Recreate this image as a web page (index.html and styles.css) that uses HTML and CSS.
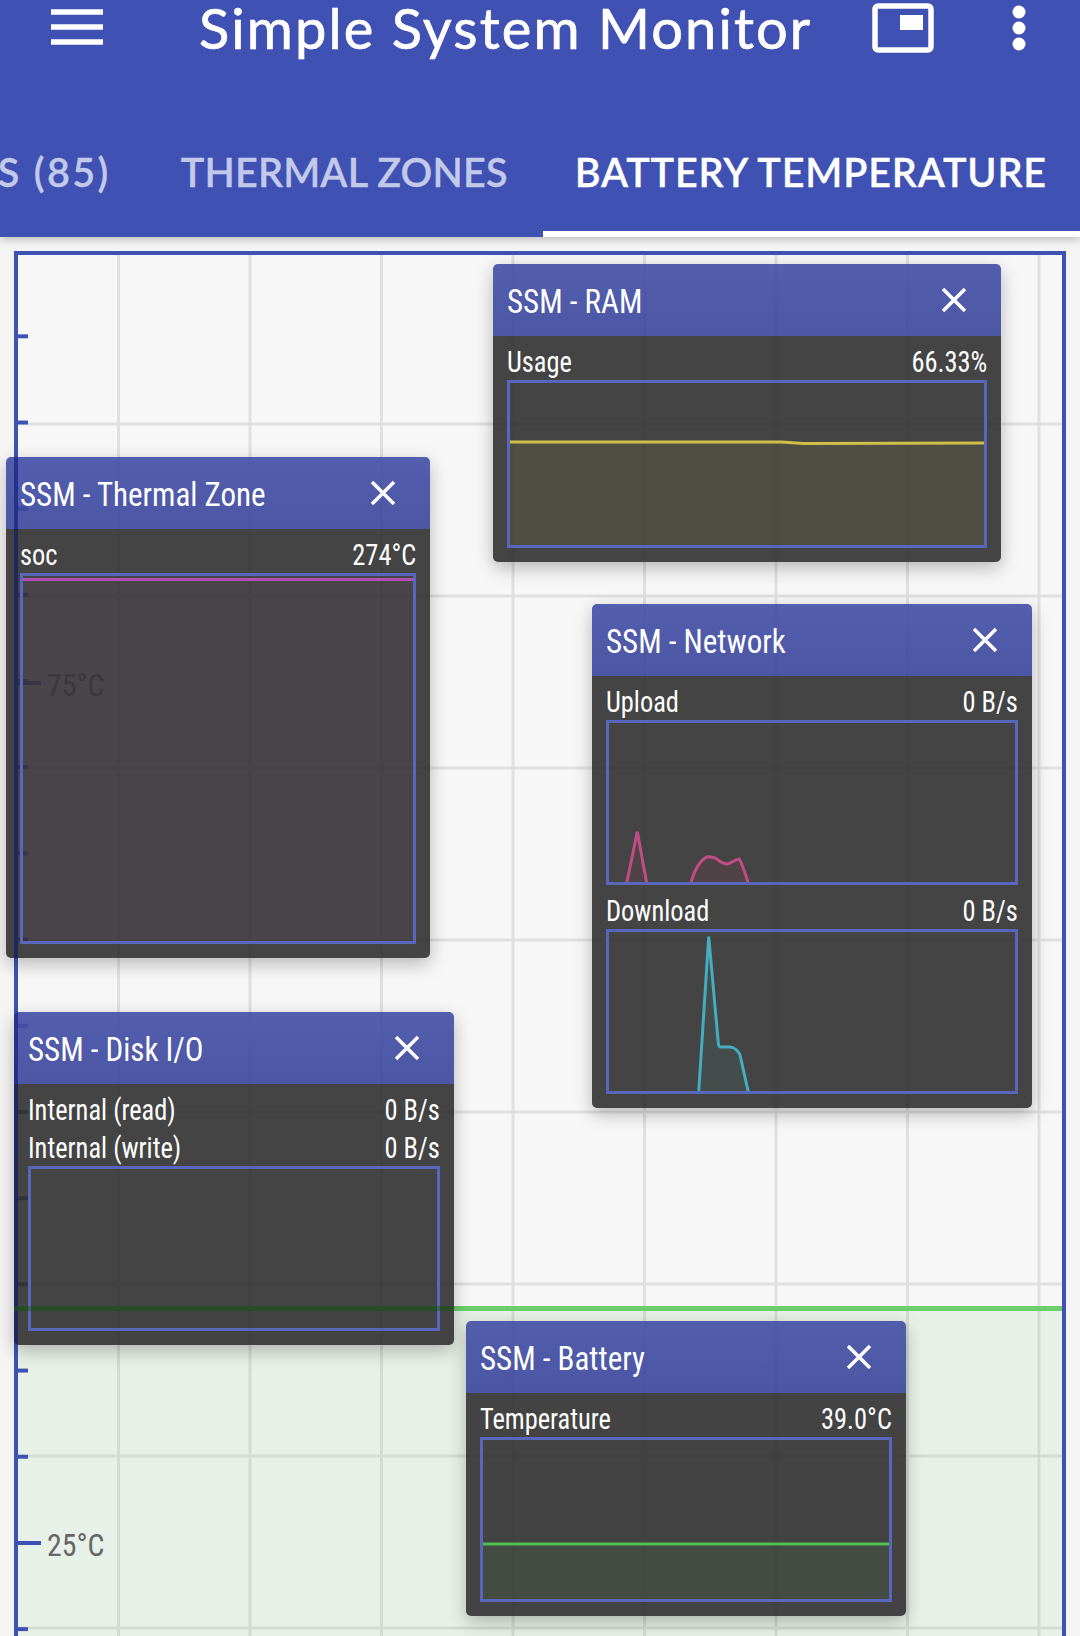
FILE: index.html
```html
<!DOCTYPE html>
<html lang="en">
<head>
<meta charset="utf-8">
<title>Simple System Monitor</title>
<link rel="stylesheet" href="styles.css">
</head>
<body>
<div class="app">
  <header class="appbar">
    <div class="toolbar">
      <svg class="icon-menu" viewBox="0 0 52 36"><path d="M0 3h52M0 18h52M0 33h52"/></svg>
      <h1 class="app-title">Simple System Monitor</h1>
      <svg class="icon-pip" viewBox="0 0 62 50"><rect x="3" y="3" width="56" height="44" rx="3"/><path class="pip-fill" d="M28 12h23v15H28z"/></svg>
      <svg class="icon-more" viewBox="0 0 14 46"><circle cx="7" cy="7" r="6.5"/><circle cx="7" cy="23" r="6.5"/><circle cx="7" cy="39" r="6.5"/></svg>
    </div>
    <nav class="tabs">
      <span class="tab tab-partial">S (85)</span>
      <span class="tab">THERMAL ZONES</span>
      <span class="tab tab-active">BATTERY TEMPERATURE</span>
    </nav>
  </header>
  <main class="chart">
    <div class="axis"></div>
    <div class="zone"></div>
    <span class="axis-label label-75"><span class="narrow">75°C</span></span>
    <span class="axis-label label-25"><span class="narrow">25°C</span></span>
  </main>

  <section class="win win-ram">
    <div class="win-title"><span class="narrow">SSM - RAM</span><svg class="icon-x" viewBox="0 0 26 26"><path d="M2 2l22 22M24 2L2 24"/></svg></div>
    <div class="win-body">
      <div class="row"><span class="narrow">Usage</span><span class="narrow end">66.33%</span></div>
      <div class="graph graph-ram"><svg viewBox="0 0 474 162" preserveAspectRatio="none"><path class="fill-yellow" d="M0 59L270 59C280 59 285 60.5 295 60.5L474 60V162H0Z"/><path class="line-yellow" d="M0 59L270 59C280 59 285 60.5 295 60.5L474 60"/></svg></div>
    </div>
  </section>

  <section class="win win-thermal">
    <div class="win-title"><span class="narrow">SSM - Thermal Zone</span><svg class="icon-x" viewBox="0 0 26 26"><path d="M2 2l22 22M24 2L2 24"/></svg></div>
    <div class="win-body">
      <div class="row"><span class="narrow">soc</span><span class="narrow end">274°C</span></div>
      <div class="graph graph-thermal"><svg viewBox="0 0 390 365" preserveAspectRatio="none"><path class="fill-pink" d="M0 3.5H390V365H0Z"/><path class="line-purple" d="M0 3.5H390"/></svg></div>
    </div>
  </section>

  <section class="win win-network">
    <div class="win-title"><span class="narrow">SSM - Network</span><svg class="icon-x" viewBox="0 0 26 26"><path d="M2 2l22 22M24 2L2 24"/></svg></div>
    <div class="win-body">
      <div class="row"><span class="narrow">Upload</span><span class="narrow end">0 B/s</span></div>
      <div class="graph"><svg viewBox="0 0 406 159" preserveAspectRatio="none"><path class="fill-rose" d="M17.7 160L28.3 108.7L37.7 160ZM82 160C85 148 89 139 97.7 134C101 133 103 134 106 135C111 138 114 141 117.7 141C122 141 126 136 130.3 136C133 140 136 150 139.3 160Z"/><path class="line-rose" d="M17.7 160L28.3 108.7L37.7 160M82 160C85 148 89 139 97.7 134C101 133 103 134 106 135C111 138 114 141 117.7 141C122 141 126 136 130.3 136C133 140 136 150 139.3 160"/></svg></div>
      <div class="row"><span class="narrow">Download</span><span class="narrow end">0 B/s</span></div>
      <div class="graph"><svg viewBox="0 0 406 159" preserveAspectRatio="none"><path class="fill-cyan" d="M89.7 160L99.7 4.7L109.3 111C110 116 111 115 112.7 115H121C125 115 129 119 131 123L139.3 160Z"/><path class="line-cyan" d="M89.7 160L99.7 4.7L109.3 111C110 116 111 115 112.7 115H121C125 115 129 119 131 123L139.3 160"/></svg></div>
    </div>
  </section>

  <section class="win win-disk">
    <div class="win-title"><span class="narrow">SSM - Disk I/O</span><svg class="icon-x" viewBox="0 0 26 26"><path d="M2 2l22 22M24 2L2 24"/></svg></div>
    <div class="win-body">
      <div class="row"><span class="narrow">Internal (read)</span><span class="narrow end">0 B/s</span></div>
      <div class="row"><span class="narrow">Internal (write)</span><span class="narrow end">0 B/s</span></div>
      <div class="graph"></div>
    </div>
  </section>

  <section class="win win-battery">
    <div class="win-title"><span class="narrow">SSM - Battery</span><svg class="icon-x" viewBox="0 0 26 26"><path d="M2 2l22 22M24 2L2 24"/></svg></div>
    <div class="win-body">
      <div class="row"><span class="narrow">Temperature</span><span class="narrow end">39.0°C</span></div>
      <div class="graph"><svg viewBox="0 0 406 159" preserveAspectRatio="none"><path class="fill-green" d="M0 104H406V159H0Z"/><path class="line-green" d="M0 104H406"/></svg></div>
    </div>
  </section>
</div>
</body>
</html>
```
FILE: styles.css
```css
* { box-sizing: border-box; }
html, body { margin: 0; padding: 0; }
body { background: #f5f5f5; font-family: Roboto, "Liberation Sans", sans-serif; }
.app { position: relative; width: 1080px; height: 1636px; overflow: hidden; display: flex; flex-direction: column; }

.appbar { background: #3f51b2; height: 237px; flex: none; display: flex; flex-direction: column; box-shadow: 0 3px 8px rgba(0,0,0,.22); position: relative; z-index: 1; }
.toolbar { height: 56px; display: flex; align-items: center; padding: 0 54px 0 51px; flex: none; }
.icon-menu { width: 52px; height: 36px; flex: none; margin-top: -3px; }
.icon-menu path { stroke: #fff; stroke-width: 5.5; fill: none; }
.app-title { flex: 1; margin: 0 0 0 96px; color: #fff; font: 400 56px Lato, sans-serif; letter-spacing: 2.1px; line-height: 56px; white-space: nowrap; -webkit-text-stroke: .7px #fff; }
.icon-pip { width: 62px; height: 50px; flex: none; margin-right: 78px; }
.icon-pip rect { fill: none; stroke: #fff; stroke-width: 5.5; }
.pip-fill { fill: #fff; }
.icon-more { width: 14px; height: 46px; flex: none; fill: #fff; }

.tabs { flex: 1; display: flex; justify-content: flex-end; align-items: flex-end; gap: 67px; padding: 0 33px 40px 0; position: relative; }
.tab { color: #c2c9e9; font: 600 39.5px Lato, sans-serif; letter-spacing: .2px; white-space: nowrap; line-height: 50px; -webkit-text-stroke: .3px currentColor; }
.tab-active { color: #fff; letter-spacing: .87px; }
.tab-partial { letter-spacing: 2.4px; margin-right: 3px; }
.tabs::after { content: ""; position: absolute; left: 543px; right: 0; bottom: 0; height: 6px; background: #fff; }

.chart { position: absolute; left: 14px; top: 251px; width: 1052px; height: 1500px; border: 4px solid #3f51b2; background-color: #f7f7f7;
  background-image: linear-gradient(to left, #e0e0e0 3px, transparent 3px), linear-gradient(to top, #e0e0e0 3px, transparent 3px);
  background-size: 131.5px 172px; background-position: -29.5px -1.5px; }
.axis { position: absolute; left: 0; top: 0; width: 10px; height: 1400px; z-index: 2;
  background-image: linear-gradient(to top, #3f51b2 4px, transparent 4px); background-size: 10px 86.2px; background-position: 0 -2.9px; }
.zone { position: absolute; left: 0; right: 0; top: 1051px; bottom: 0; border-top: 5px solid #6bcf6b; background: rgba(60,180,60,.08); }
.axis-label { position: absolute; left: 0; color: #666; font-size: 32px; font-stretch: 75%; line-height: 36px; padding-left: 29px; z-index: 2; white-space: nowrap; }
.axis-label::before { content: ""; position: absolute; left: 0; top: 14px; width: 23px; height: 4px; background: #3f51b2; }
.axis-label .narrow { transform: scaleX(.93); }
.label-75 { top: 412px; }
.label-25 { top: 1272px; }
.label-75 .narrow { margin-top: -3px; }
.label-25 .narrow { margin-top: -1px; }

.narrow { display: inline-block; transform: scaleX(.91); transform-origin: left center; white-space: nowrap; }
.narrow.end { transform-origin: right center; }

.win { position: absolute; z-index: 3; border-radius: 5px; overflow: hidden; box-shadow: 0 6px 18px rgba(0,0,0,.26); color: #fff; }
.win-ram { left: 493px; top: 264px; width: 508px; }
.win-thermal { left: 6px; top: 457px; width: 424px; }
.win-network { left: 592px; top: 604px; width: 440px; }
.win-disk { left: 14px; top: 1012px; width: 440px; }
.win-battery { left: 466px; top: 1321px; width: 440px; }

.win-thermal::before, .win-disk::before { content: ""; position: absolute; top: 0; bottom: 0; width: 4px; background: rgba(20,30,120,.55); }
.win-thermal::before { left: 8px; }
.win-disk::before { left: 0; }
.win-disk::after { content: ""; position: absolute; left: 0; right: 0; top: 294px; height: 5px; background: rgba(30,90,30,.5); }

.win-title { height: 72px; background: linear-gradient(rgba(66,77,166,.9), rgba(57,69,156,.9)); display: flex; align-items: center; justify-content: space-between; padding: 2px 34px 0 14px; font-size: 33px; font-stretch: 75%; }
.win-title .narrow { transform: scaleX(.94); }
.icon-x { width: 26px; height: 26px; flex: none; margin-top: -2px; }
.icon-x path { stroke: #fff; stroke-width: 3.5; fill: none; }
.win-body { padding: 6px 14px 14px; background: rgba(48,48,48,.9); }
.row { height: 38px; padding-top: 2px; display: flex; align-items: center; justify-content: space-between; font-size: 29px; font-stretch: 75%; white-space: nowrap; }
.graph { height: 165px; border: 3px solid #5867bb; }
.graph + .row { margin-top: 6px; }
.graph svg { display: block; width: 100%; height: 100%; overflow: hidden; }
.graph-ram { height: 168px; }
.graph-thermal { height: 371px; }

.line-yellow, .line-purple, .line-rose, .line-cyan, .line-green { fill: none; stroke-width: 3; }
.line-yellow { stroke: #cfc04a; }
.fill-yellow { fill: rgba(205,205,90,.08); }
.line-purple { stroke: #b64db8; }
.fill-pink { fill: rgba(170,90,190,.05); }
.line-rose { stroke: #c04d85; }
.fill-rose { fill: rgba(200,70,110,.09); }
.line-cyan { stroke: #45adbf; }
.fill-cyan { fill: rgba(70,180,190,.07); }
.line-green { stroke: #4fc052; }
.fill-green { fill: rgba(80,190,80,.07); }
```
